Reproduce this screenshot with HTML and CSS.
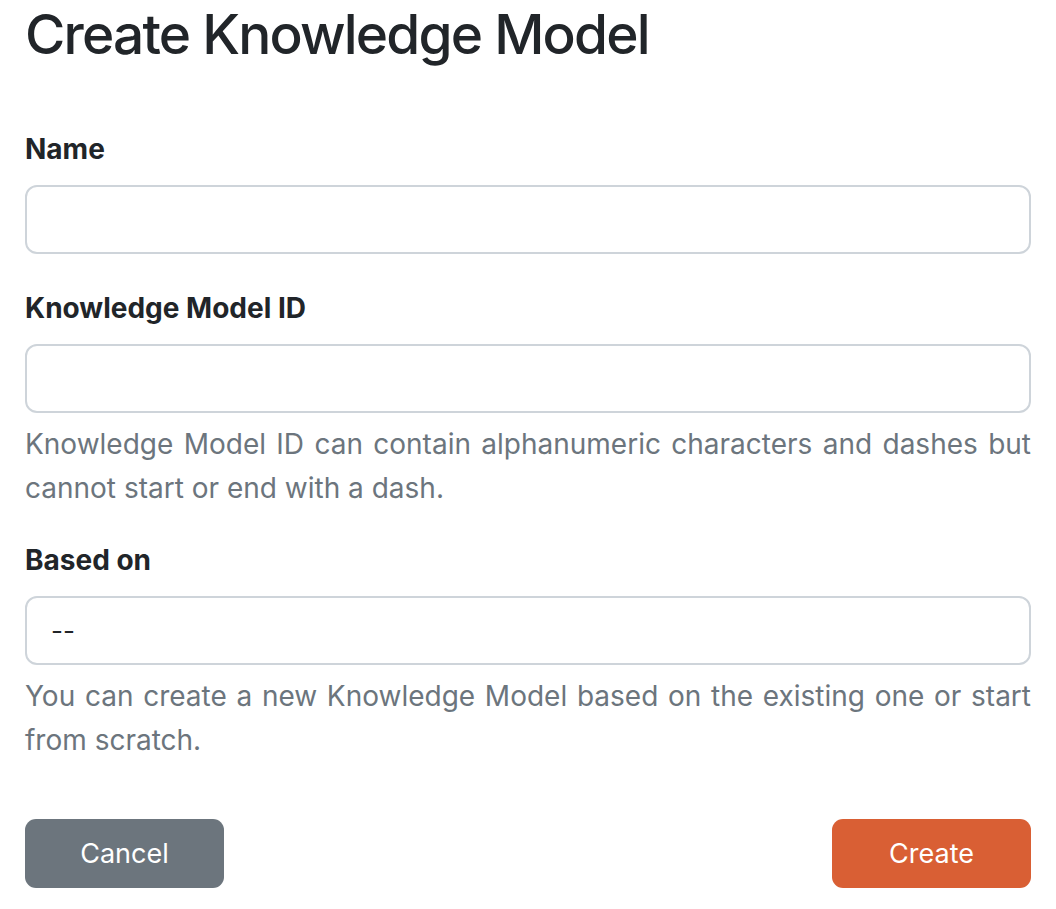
FILE: index.html
```html
<!DOCTYPE html>
<html lang="en">
<head>
<meta charset="utf-8">
<title>Create Knowledge Model</title>
<link rel="stylesheet" href="styles.css">
</head>
<body>
<div class="page">
  <h1 class="title">Create Knowledge Model</h1>
  <form class="form">
    <div class="group group-first">
      <label class="label" for="name">Name</label>
      <input class="control" id="name" type="text">
    </div>
    <div class="group">
      <label class="label" for="kmid">Knowledge Model ID</label>
      <input class="control" id="kmid" type="text">
      <p class="help">Knowledge Model ID can contain alphanumeric characters and dashes but cannot start or end with a dash.</p>
    </div>
    <div class="group group-after-help">
      <label class="label" for="based">Based on</label>
      <div class="control select" id="based">--</div>
      <p class="help">You can create a new Knowledge Model based on the existing one or start from scratch.</p>
    </div>
    <div class="actions">
      <button type="button" class="btn btn-cancel">Cancel</button>
      <button type="button" class="btn btn-create">Create</button>
    </div>
  </form>
</div>
</body>
</html>
```

FILE: styles.css
```css
* { box-sizing: border-box; }

body {
  margin: 0;
  background: #ffffff;
  color: #212529;
  font-family: Inter, "Noto Sans", "Liberation Sans", sans-serif;
}

.page {
  padding: 0 25px;
}

.title {
  margin: 0;
  font-size: 55px;
  line-height: 68px;
  font-weight: 500;
  letter-spacing: -1.8px;
  color: #212529;
}

.form {
  display: flex;
  flex-direction: column;
}

.group {
  display: flex;
  flex-direction: column;
  margin-top: 36px;
}

.group-first {
  margin-top: 63px;
}

.group-after-help {
  margin-top: 32px;
}

.label {
  display: block;
  font-size: 28px;
  line-height: 36px;
  font-weight: 700;
  margin-bottom: 18px;
}

.control {
  display: block;
  width: 100%;
  height: 69px;
  border: 2px solid #ced4da;
  border-radius: 12px;
  background: #ffffff;
  font-family: inherit;
  font-size: 26px;
  color: #212529;
  padding: 0 24px;
  outline: none;
}

.select {
  display: flex;
  align-items: center;
}

.help {
  margin: 9px 0 0;
  font-size: 28px;
  line-height: 44px;
  color: #6c757d;
  text-align: justify;
}

.actions {
  display: flex;
  justify-content: space-between;
  margin-top: 57px;
}

.btn {
  width: 199px;
  height: 69px;
  border: none;
  border-radius: 11px;
  font-family: inherit;
  font-size: 27px;
  color: #ffffff;
  cursor: pointer;
}

.btn-cancel {
  background: #6c757d;
}

.btn-create {
  background: #d95f34;
}
```
